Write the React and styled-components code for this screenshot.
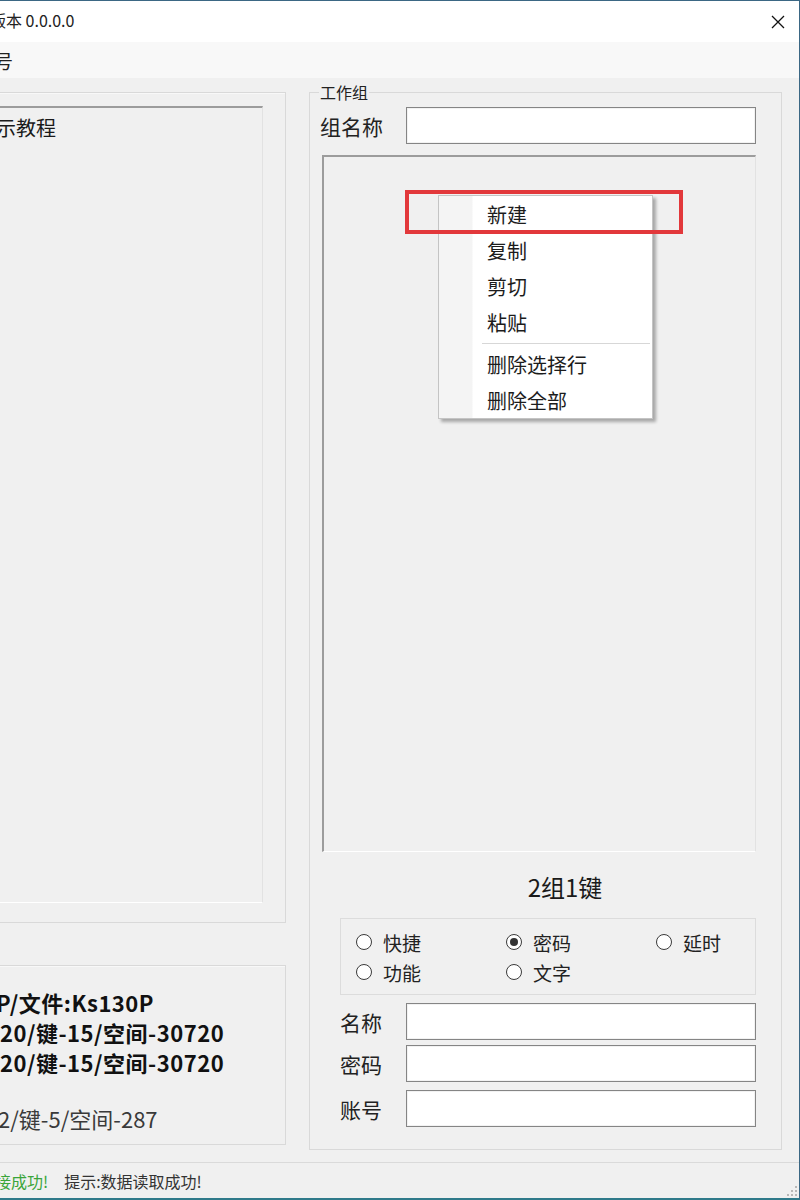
import React from 'react'
import styled, { createGlobalStyle } from 'styled-components'

const GlobalStyle = createGlobalStyle`
  html, body {
    margin: 0;
    padding: 0;
    background: #f0f0f0;
  }
  body {
    font-family: "Noto Sans CJK SC", "Noto Sans", sans-serif;
    color: #1a1a1a;
  }
`

const Window = styled.div`
  width: 800px;
  height: 1200px;
  box-sizing: border-box;
  display: flex;
  flex-direction: column;
  overflow: hidden;
  background: #f0f0f0;
  border-top: 1px solid #3b6784;
  border-right: 1px solid #3b6784;
  border-bottom: 2px solid #2f7a8a;
`

const TitleBar = styled.div`
  height: 41px;
  flex: none;
  display: flex;
  align-items: center;
  background: #ffffff;
`

const TitleText = styled.span`
  margin-left: -10px;
  margin-top: -3px;
  font-size: 16px;
  color: #222;
  white-space: nowrap;
`

const CloseButton = styled.div`
  margin-left: auto;
  margin-right: 14px;
  width: 14px;
  height: 14px;
  display: flex;
`

const MenuBar = styled.div`
  height: 36px;
  flex: none;
  display: flex;
  align-items: center;
  background: #f8f8f8;
`

const MenuItem = styled.span`
  margin-left: -25px;
  font-size: 19px;
  color: #222;
`

const Main = styled.div`
  flex: 1;
  display: flex;
  gap: 23px;
  margin-left: -214px;
  min-height: 0;
`

const LeftColumn = styled.div`
  width: 500px;
  flex: none;
  display: flex;
  flex-direction: column;
`

const PlainGroup = styled.div`
  box-sizing: border-box;
  margin-top: ${p => p.$top}px;
  height: ${p => p.$height}px;
  border: 1px solid #d9d9d9;
  box-shadow: inset 1px 1px 0 #f8f8f8;
  padding: ${p => p.$pad};
  display: flex;
  flex-direction: column;
`

const Sunken = styled.div`
  box-sizing: border-box;
  border-style: solid;
  border-width: 2px 1px 1px 2px;
  border-color: #9c9c9c #e2e2e2 #ffffff #9c9c9c;
  background: #f0f0f0;
`

const ListBox = styled(Sunken)`
  flex: 1;
  padding: 8px 0 0 177px;
  font-size: 20px;
  line-height: 24px;
  white-space: nowrap;
`

const InfoLine = styled.div`
  display: flex;
  white-space: nowrap;
  font-size: 22px;
  line-height: 30px;
  font-weight: ${p => (p.$bold ? 700 : 400)};
  letter-spacing: ${p => (p.$bold ? 0.5 : 0)}px;
  color: ${p => (p.$bold ? '#111' : '#3a3a3a')};
  margin-top: ${p => p.$gap || 0}px;
`

const Lead = styled.span`
  flex: none;
  width: ${p => p.$w}px;
  overflow: hidden;
  text-align: right;
  direction: rtl;
`

const WorkGroup = styled.fieldset`
  box-sizing: border-box;
  width: 473px;
  height: 1068px;
  margin: 4px 0 0;
  padding: 5px 25px 0 10px;
  min-width: 0;
  border: 1px solid #d9d9d9;
  display: flex;
  flex-direction: column;
`

const Legend = styled.legend`
  padding: 0 1px;
  margin-left: -1px;
  font-size: 16px;
  line-height: 20px;
  color: #222;
`

const FieldRow = styled.div`
  display: flex;
  align-items: center;
  margin-top: ${p => p.$gap || 0}px;
  margin-left: ${p => p.$indent || 0}px;
`

const FieldLabel = styled.span`
  width: ${p => p.$w}px;
  flex: none;
  font-size: 21px;
  color: #222;
`

const TextBox = styled.div`
  flex: 1;
  height: 37px;
  box-sizing: border-box;
  background: #ffffff;
  border: 1px solid #858585;
  box-shadow: inset 0 0 0 1px #f2f2f2;
`

const ListView = styled(Sunken)`
  position: relative;
  margin: 11px 0 0 2px;
  height: 697px;
  flex: none;
`

const ContextMenu = styled.div`
  position: absolute;
  left: 114px;
  top: 38px;
  width: 215px;
  height: 224px;
  box-sizing: border-box;
  padding-top: 1px;
  border: 1px solid #c4c4c4;
  background: linear-gradient(to right, #f4f4f4 0 33px, #ffffff 34px);
  box-shadow: 3px 3px 3px rgba(0, 0, 0, 0.3);
`

const MenuEntry = styled.div`
  height: 36px;
  line-height: 36px;
  padding-left: 48px;
  font-size: 20px;
  color: #1c1c1c;
  white-space: nowrap;
`

const MenuSeparator = styled.div`
  height: 1px;
  margin: 2px 2px 3px 43px;
  background: #d7d7d7;
`

const Highlight = styled.div`
  position: absolute;
  left: 81px;
  top: 33px;
  width: 278px;
  height: 44px;
  box-sizing: border-box;
  border: 4px solid #e2383b;
  pointer-events: none;
`

const CountLabel = styled.div`
  height: 66px;
  flex: none;
  padding-top: 4px;
  box-sizing: border-box;
  line-height: 62px;
  font-size: 24px;
  text-align: center;
  padding-left: 54px;
  color: #1a1a1a;
`

const RadioBox = styled.div`
  margin-left: 20px;
  height: 77px;
  box-sizing: border-box;
  border: 1px solid #dcdcdc;
  padding: 8px 0 0 15px;
  display: grid;
  grid-template-columns: 150px 150px 1fr;
  grid-auto-rows: 30px;
`

const RadioItem = styled.div`
  display: flex;
  align-items: center;
  gap: 11px;
  font-size: 19px;
  color: #222;
`

const RadioDot = styled.span`
  width: 16px;
  height: 16px;
  box-sizing: border-box;
  border-radius: 50%;
  border: 1px solid #3a3a3a;
  background: #ffffff;
  display: flex;
  align-items: center;
  justify-content: center;
  &::after {
    content: '';
    width: 8px;
    height: 8px;
    border-radius: 50%;
    background: #333;
    display: ${p => (p.$checked ? 'block' : 'none')};
  }
`

const StatusBar = styled.div`
  height: 36px;
  flex: none;
  box-sizing: border-box;
  border-top: 1px solid #dadada;
  display: flex;
  align-items: center;
  font-size: 16px;
  white-space: nowrap;
`

const StatusText = styled.span`
  color: ${p => p.$color || '#333'};
  margin-left: ${p => p.$gap}px;
`

const Grip = styled.svg`
  margin-left: auto;
  align-self: flex-end;
  margin-bottom: 1px;
  margin-right: 1px;
`

const radios = [
  { label: '快捷' },
  { label: '密码', checked: true },
  { label: '延时' },
  { label: '功能' },
  { label: '文字' },
]

const menuTop = ['新建', '复制', '剪切', '粘贴']
const menuBottom = ['删除选择行', '删除全部']

const App = () => {
  return (
    <>
      <GlobalStyle />
      <Window>
        <TitleBar>
          <TitleText>版本 0.0.0.0</TitleText>
          <CloseButton>
            <svg width="14" height="14" viewBox="0 0 14 14">
              <path d="M1 1 L13 13 M13 1 L1 13" stroke="#111" strokeWidth="1.3" fill="none" />
            </svg>
          </CloseButton>
        </TitleBar>
        <MenuBar>
          <MenuItem>账号</MenuItem>
        </MenuBar>
        <Main>
          <LeftColumn>
            <PlainGroup $top={14} $height={831} $pad="13px 22px 19px 10px">
              <ListBox>演示教程</ListBox>
            </PlainGroup>
            <PlainGroup $top={42} $height={180} $pad="21px 0 0 0">
              <InfoLine $bold>
                <Lead $w={209}>设备:Ks130</Lead>P/文件:Ks130P
              </InfoLine>
              <InfoLine $bold>
                <Lead $w={213}>容量:组-</Lead>20/键-15/空间-30720
              </InfoLine>
              <InfoLine $bold>
                <Lead $w={213}>文件:组-</Lead>20/键-15/空间-30720
              </InfoLine>
              <InfoLine $gap={26}>
                <Lead $w={211}>已用:组-</Lead>2/键-5/空间-287
              </InfoLine>
            </PlainGroup>
          </LeftColumn>

          <WorkGroup>
            <Legend>工作组</Legend>
            <FieldRow>
              <FieldLabel $w={86}>组名称</FieldLabel>
              <TextBox />
            </FieldRow>
            <ListView>
              <ContextMenu>
                {menuTop.map(item => (
                  <MenuEntry key={item}>{item}</MenuEntry>
                ))}
                <MenuSeparator />
                {menuBottom.map(item => (
                  <MenuEntry key={item}>{item}</MenuEntry>
                ))}
              </ContextMenu>
              <Highlight />
            </ListView>
            <CountLabel>2组1键</CountLabel>
            <RadioBox>
              {radios.map(r => (
                <RadioItem key={r.label}>
                  <RadioDot $checked={r.checked} />
                  {r.label}
                </RadioItem>
              ))}
            </RadioBox>
            <FieldRow $gap={8} $indent={20}>
              <FieldLabel $w={66}>名称</FieldLabel>
              <TextBox />
            </FieldRow>
            <FieldRow $gap={5} $indent={20}>
              <FieldLabel $w={66}>密码</FieldLabel>
              <TextBox />
            </FieldRow>
            <FieldRow $gap={8} $indent={20}>
              <FieldLabel $w={66}>账号</FieldLabel>
              <TextBox />
            </FieldRow>
          </WorkGroup>
        </Main>
        <StatusBar>
          <StatusText $color="#3aa53a" $gap={-21}>连接成功!</StatusText>
          <StatusText $gap={16}>提示:数据读取成功!</StatusText>
          <Grip width="14" height="14" viewBox="0 0 14 14">
            {[[11, 3], [11, 7], [7, 7], [11, 11], [7, 11], [3, 11]].map(([x, y]) => (
              <rect key={`${x}-${y}`} x={x} y={y} width="2" height="2" fill="#b8b8b8" />
            ))}
          </Grip>
        </StatusBar>
      </Window>
    </>
  )
}

export default App
